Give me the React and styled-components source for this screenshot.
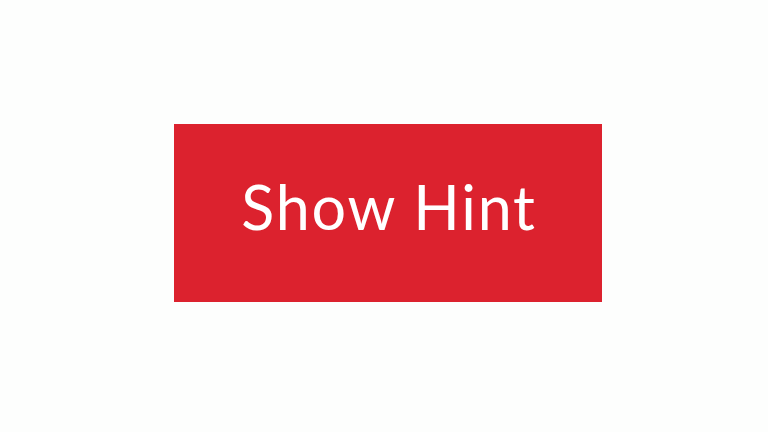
import React from 'react';
import styled, { createGlobalStyle } from 'styled-components';

const GlobalStyle = createGlobalStyle`
  html, body {
    margin: 0;
    padding: 0;
    background: #fdfefd;
  }
`;

const Page = styled.div`
  width: 768px;
  height: 432px;
  box-sizing: border-box;
  padding: 124px 0 0 174px;
`;

const HintButton = styled.button`
  width: 428px;
  height: 178px;
  border: none;
  border-radius: 0;
  background: #dc222e;
  color: #fff;
  font-family: Lato, "Open Sans", sans-serif;
  font-weight: 400;
  font-size: 61px;
  letter-spacing: 1.8px;
  display: flex;
  align-items: center;
  justify-content: center;
  padding: 0 0 13px 2px;
  cursor: pointer;
`;

function App() {
  return (
    <>
      <GlobalStyle />
      <Page>
        <HintButton>Show Hint</HintButton>
      </Page>
    </>
  );
}

export default App;
